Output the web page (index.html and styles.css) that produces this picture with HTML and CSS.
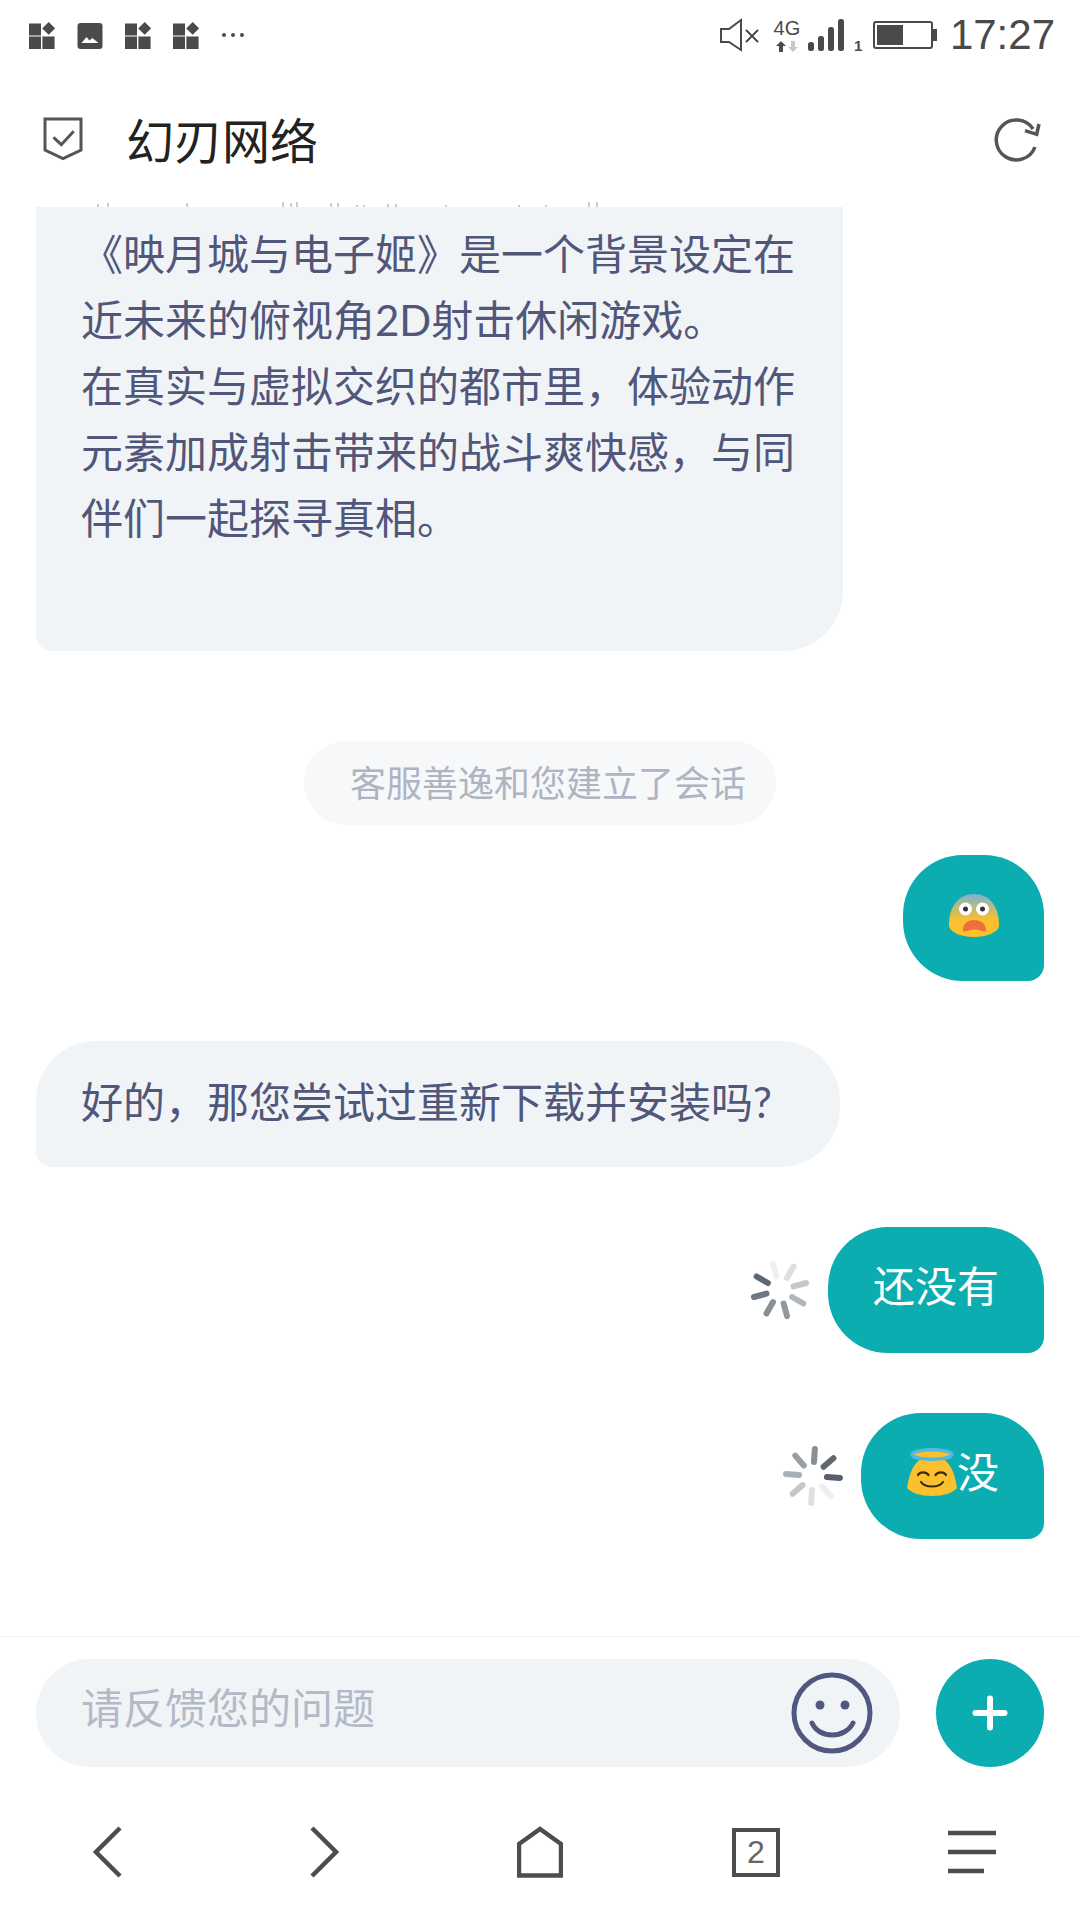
FILE: index.html
```html
<!DOCTYPE html>
<html lang="zh-CN">
<head>
    <meta charset="UTF-8">
    <meta name="viewport" content="width=device-width, initial-scale=1.0">
    <title>幻刃网络</title>
    <link rel="stylesheet" href="styles.css">
</head>
<body>
<div class="app">

    <!-- Status bar -->
    <div class="status-bar">
        <div class="status-left">
            <svg class="tile-icon" viewBox="0 0 26 27"><path d="M0 1.500h12v12H0zM0 14.500h12V27H0zM13.400 14.500h12.200V27H13.400zM19.700 0l6.500 6.400-6.500 6.400-6.500-6.400z"/></svg>
            <svg class="tile-icon" viewBox="0 0 26 27"><rect x="0.500" y="1" width="25" height="26" rx="3"/><path d="M4.500 21l5-6 3 3.400 2.800-2.400 6.200 5z" fill="#fff"/></svg>
            <svg class="tile-icon" viewBox="0 0 26 27"><path d="M0 1.500h12v12H0zM0 14.500h12V27H0zM13.400 14.500h12.200V27H13.400zM19.700 0l6.500 6.400-6.500 6.400-6.500-6.400z"/></svg>
            <svg class="tile-icon" viewBox="0 0 26 27"><path d="M0 1.500h12v12H0zM0 14.500h12V27H0zM13.400 14.500h12.200V27H13.400zM19.700 0l6.500 6.400-6.500 6.400-6.500-6.400z"/></svg>
            <svg class="dots-icon" viewBox="0 0 24 6"><circle cx="3" cy="3" r="2"/><circle cx="12" cy="3" r="2"/><circle cx="21" cy="3" r="2"/></svg>
        </div>
        <div class="status-right">
            <svg class="mute-icon" viewBox="0 0 39 34" fill="none" stroke="#4a4a4a" stroke-width="2"><path d="M1 11h8L21 2v30L9 24H1z"/><path d="M26 12l12 12M38 12L26 24"/></svg>
            <div class="net">
                <span class="net-label">4G</span>
                <svg class="net-arrows" viewBox="0 0 26 11"><path d="M7 0l5 5H9v6H5V5H2z" fill="#4a4a4a"/><path d="M19 11l5-5h-3V0h-4v6h-3z" fill="#c8c8c8"/></svg>
            </div>
            <svg class="signal-icon" viewBox="0 0 36 32"><rect x="0" y="23" width="6" height="9" rx="2.500"/><rect x="10" y="17" width="6" height="15" rx="2.500"/><rect x="20" y="8" width="6" height="24" rx="2.500"/><rect x="30" y="0" width="6" height="32" rx="2.500"/></svg>
            <span class="sim">1</span>
            <svg class="battery-icon" viewBox="0 0 64 28"><rect x="1" y="1" width="58" height="26" rx="2" fill="none" stroke="#4a4a4a" stroke-width="2"/><rect x="4" y="4" width="26" height="20"/><rect x="60" y="8" width="4" height="12"/></svg>
            <span class="clock">17:27</span>
        </div>
    </div>

    <!-- Header -->
    <div class="header">
        <svg class="shield-icon" viewBox="0 0 40 44" fill="none" stroke="#555" stroke-width="3"><path d="M2 2h36v31l-18 8.500L2 33z"/><path d="M10.500 20.300l7.800 7.400 12.400-13.400"/></svg>
        <h1 class="title">幻刃网络</h1>
        <svg class="refresh-icon" viewBox="0 0 50 46" fill="none" stroke="#555" stroke-width="3.500"><path d="M41 31A20 20 0 1 1 39 13"/><path d="M45 8l-2.300 10.300L31 14.700"/></svg>
    </div>
    <svg class="scrap" viewBox="0 0 1080 7" stroke="#c9ccd4" stroke-width="2"><path d="M98 4v3M108 3v4M187 3v4M283 2v5M291 3v4M297 2v5M331 3v4M338 3v4M357 5v2M364 5v2M388 4v3M396 4v3M446 5v2M519 5v2M546 5v2M589 2v5M597 2v5"/></svg>

    <!-- Messages -->
    <div class="chat">
        <div class="msg-left bubble bubble-long">
            <p>《映月城与电子姬》是一个背景设定在近未来的俯视角2D射击休闲游戏。</p>
            <p>在真实与虚拟交织的都市里，体验动作元素加成射击带来的战斗爽快感，与同伴们一起探寻真相。</p>
        </div>

        <div class="notice">客服善逸和您建立了会话</div>

        <div class="msg-right">
            <div class="bubble bubble-mine">
                <svg class="emoji" viewBox="0 0 50 43">
                    <defs><linearGradient id="fear" x1="0" y1="0" x2="0" y2="1"><stop offset="0.05" stop-color="#83b4c6"/><stop offset="0.6" stop-color="#fbc02d"/></linearGradient></defs>
                    <path d="M0 31C0 12 10 0 25 0s25 12 25 31c0 7-12 12-25 12S0 38 0 31z" fill="url(#fear)"/>
                    <circle cx="16.500" cy="15" r="6.500" fill="#fff"/><circle cx="33.500" cy="15" r="6.500" fill="#fff"/>
                    <circle cx="16.500" cy="15" r="2.500" fill="#37333c"/><circle cx="33.500" cy="15" r="2.500" fill="#37333c"/>
                    <path d="M14 36c0-6 4-10 11-10s12 4 12 10c0 2-2 1.500-5 .5-4-1.200-9-1.200-13 .2-3 1-5 1.300-5-.7z" fill="#ee6e3c"/>
                </svg>
            </div>
        </div>

        <div class="msg-left bubble bubble-short">好的，那您尝试过重新下载并安装吗?</div>

        <div class="msg-right">
            <svg class="spinner" viewBox="-30 -30 60 60" stroke="#565f6b" stroke-width="6" stroke-linecap="round">
                <g transform="rotate(-15)">
                    <path d="M0 -14V-27" opacity="0.1"/>
                    <path d="M0 -14V-27" opacity="0.2" transform="rotate(45)"/>
                    <path d="M0 -14V-27" opacity="0.35" transform="rotate(90)"/>
                    <path d="M0 -14V-27" opacity="0.45" transform="rotate(135)"/>
                    <path d="M0 -14V-27" opacity="0.65" transform="rotate(180)"/>
                    <path d="M0 -14V-27" opacity="0.7" transform="rotate(225)"/>
                    <path d="M0 -14V-27" opacity="0.85" transform="rotate(270)"/>
                    <path d="M0 -14V-27" opacity="0.95" transform="rotate(315)"/>
                </g>
            </svg>
            <div class="bubble bubble-mine">还没有</div>
        </div>

        <div class="msg-right">
            <svg class="spinner" viewBox="-30 -30 60 60" stroke="#565f6b" stroke-width="6" stroke-linecap="round">
                <g transform="rotate(4)">
                    <path d="M0 -14V-27" opacity="0.7"/>
                    <path d="M0 -14V-27" opacity="0.95" transform="rotate(45)"/>
                    <path d="M0 -14V-27" opacity="1" transform="rotate(90)"/>
                    <path d="M0 -14V-27" opacity="0.1" transform="rotate(135)"/>
                    <path d="M0 -14V-27" opacity="0.2" transform="rotate(180)"/>
                    <path d="M0 -14V-27" opacity="0.35" transform="rotate(225)"/>
                    <path d="M0 -14V-27" opacity="0.5" transform="rotate(270)"/>
                    <path d="M0 -14V-27" opacity="0.6" transform="rotate(315)"/>
                </g>
            </svg>
            <div class="bubble bubble-mine">
                <svg class="emoji emoji-angel" viewBox="0 0 50 48">
                    <path d="M0 40C2 28 6 8 25 8s23 20 25 32c-4 5-14 8-25 8S4 45 0 40z" fill="#fbc02d"/>
                    <ellipse cx="25" cy="6.500" rx="20" ry="4.800" fill="#f9c12e" stroke="#4fb8e6" stroke-width="3.500"/>
                    <g fill="none" stroke="#3a2c10" stroke-width="2.200" stroke-linecap="round">
                        <path d="M11 27c2-3.500 8-3.500 10.500 0M28.500 27c2.500-3.500 8.500-3.500 10.500 0"/>
                        <path d="M14 34c4 6 18 6 22 0"/>
                    </g>
                </svg><span>没</span>
            </div>
        </div>
    </div>

    <!-- Input row -->
    <div class="input-row">
        <div class="input-box">
            <span class="placeholder">请反馈您的问题</span>
            <svg class="smile-icon" viewBox="0 0 82 82" fill="none" stroke="#50587f" stroke-width="5">
                <circle cx="41" cy="41" r="38"/>
                <circle cx="29" cy="33" r="4.500" fill="#50587f" stroke="none"/>
                <circle cx="54" cy="33" r="4.500" fill="#50587f" stroke="none"/>
                <path d="M21 51c7 16 33 16 41 0" stroke-linecap="round"/>
            </svg>
        </div>
        <div class="add-btn">
            <svg class="plus-icon" viewBox="0 0 36 36" stroke="#fff" stroke-width="6" stroke-linecap="round"><path d="M18 3.500v29M3.500 18h29"/></svg>
        </div>
    </div>

    <!-- Browser toolbar -->
    <div class="toolbar">
        <svg class="nav-icon" viewBox="0 0 30 52"><path d="M27 2L3 26l24 24"/></svg>
        <svg class="nav-icon" viewBox="0 0 30 52"><path d="M3 2l24 24L3 50"/></svg>
        <svg class="nav-icon nav-home" viewBox="0 0 46 52"><path d="M2 18L23 3l21 15v31.500H2z"/></svg>
        <div class="tab-count">2</div>
        <svg class="nav-icon nav-menu" viewBox="0 0 48 44"><path d="M0 3h48M0 22h48M0 41h36"/></svg>
    </div>

</div>
</body>
</html>
```

FILE: styles.css
```css
* {
    box-sizing: border-box;
}

body {
    margin: 0;
    background-color: #fff;
    font-family: "Lato", "Noto Sans CJK SC", sans-serif;
}

.app {
    width: 1080px;
    height: 1920px;
    display: flex;
    flex-direction: column;
    overflow: hidden;
}

/* Status bar */
.status-bar {
    height: 70px;
    flex: none;
    display: flex;
    justify-content: space-between;
    align-items: center;
    padding: 0 25px 0 29px;
    color: #4a4a4a;
    fill: #4a4a4a;
}

.status-left {
    display: flex;
    align-items: center;
    gap: 22px;
}

.status-right {
    display: flex;
    align-items: center;
}

.tile-icon {
    width: 26px;
    height: 27px;
}

.dots-icon {
    width: 24px;
    height: 6px;
}

.mute-icon {
    width: 39px;
    height: 34px;
}

.net {
    width: 26px;
    margin-left: 15px;
    display: flex;
    flex-direction: column;
    align-items: center;
    font-family: "Liberation Sans", sans-serif;
}

.net-label {
    font-size: 20px;
    line-height: 20px;
}

.net-arrows {
    width: 26px;
    height: 11px;
    margin-top: 3px;
}

.signal-icon {
    width: 36px;
    height: 32px;
    margin-left: 8px;
}

.sim {
    align-self: flex-end;
    width: 6px;
    margin: 0 0 5px 10px;
    font: bold 15px/15px "Liberation Sans", sans-serif;
}

.battery-icon {
    width: 64px;
    height: 28px;
    margin-left: 13px;
}

.clock {
    margin-left: 13px;
    font: 42px/46px "Liberation Sans", sans-serif;
}

/* Header */
.header {
    height: 130px;
    flex: none;
    display: flex;
    align-items: center;
    padding: 7px 36px 0 43px;
}

.shield-icon {
    width: 40px;
    height: 44px;
}

.title {
    flex: 1;
    margin: 0 0 2px 43px;
    font-size: 48px;
    font-weight: 400;
    color: #222;
}

.refresh-icon {
    width: 50px;
    height: 46px;
}

.scrap {
    display: block;
    width: 1080px;
    height: 7px;
    flex: none;
}

/* Messages */
.chat {
    flex: 1;
    min-height: 0;
    overflow: hidden;
    display: flex;
    flex-direction: column;
    justify-content: flex-end;
    padding: 0 36px 97px;
}

.bubble {
    flex: none;
    min-height: 126px;
    padding: 28px 46px 32px 45px;
    border-radius: 60px 60px 60px 16px;
    font-size: 42px;
    line-height: 66px;
}

.msg-left {
    align-self: flex-start;
    margin-bottom: 60px;
    background-color: #f1f4f7;
    color: #50577a;
}

.bubble-long {
    width: 807px;
    padding: 89px 46px 100px 45px;
    margin-bottom: 90px;
}

.bubble-long p {
    margin: 0;
}

.bubble-short {
    width: 804px;
    padding-right: 0;
    white-space: nowrap;
}

.notice {
    flex: none;
    align-self: center;
    width: 472px;
    height: 84px;
    margin-bottom: 30px;
    padding-left: 46px;
    border-radius: 42px;
    background-color: #f7f8fa;
    color: #aeb4c2;
    font-size: 36px;
    line-height: 84px;
    white-space: nowrap;
}

.msg-right {
    flex: none;
    display: flex;
    justify-content: flex-end;
    align-items: center;
    gap: 18px;
    margin-bottom: 60px;
}

.msg-right:last-child {
    margin-bottom: 0;
}

.bubble-mine {
    display: flex;
    align-items: center;
    padding: 26px 45px 34px;
    border-radius: 60px 60px 16px 60px;
    background-color: #0cadb0;
    color: #fff;
}

.emoji {
    width: 50px;
    height: 43px;
    margin: 2px 0.5px 0;
}

.emoji-angel {
    height: 48px;
    margin: 0 0 0 1px;
}

.spinner {
    width: 60px;
    height: 60px;
    fill: none;
}

/* Input row */
.input-row {
    height: 131px;
    flex: none;
    display: flex;
    gap: 36px;
    padding: 22px 36px 0;
    border-top: 1px solid #f3f4f6;
}

.input-box {
    flex: 1;
    height: 108px;
    display: flex;
    justify-content: space-between;
    align-items: center;
    padding: 0 27px 0 45px;
    border-radius: 54px;
    background-color: #f1f4f7;
}

.placeholder {
    margin-bottom: 15px;
    color: #b4b9c8;
    font-size: 42px;
}

.smile-icon {
    width: 82px;
    height: 82px;
}

.add-btn {
    width: 108px;
    height: 108px;
    display: flex;
    justify-content: center;
    align-items: center;
    border-radius: 50%;
    background-color: #0cadb0;
}

.plus-icon {
    width: 36px;
    height: 36px;
}

/* Browser toolbar */
.toolbar {
    height: 153px;
    flex: none;
    display: grid;
    grid-template-columns: repeat(5, 1fr);
    justify-items: center;
    align-items: center;
    padding-top: 17px;
}

.nav-icon {
    width: 30px;
    height: 52px;
    fill: none;
    stroke: #4d4d4d;
    stroke-width: 4.500;
}

.nav-home {
    width: 46px;
}

.nav-menu {
    width: 48px;
    height: 44px;
}

.tab-count {
    width: 48px;
    height: 49px;
    display: flex;
    justify-content: center;
    align-items: center;
    border: 4.500px solid #4d4d4d;
    color: #666;
    font-family: "Liberation Sans", sans-serif;
    font-size: 32px;
}
```
